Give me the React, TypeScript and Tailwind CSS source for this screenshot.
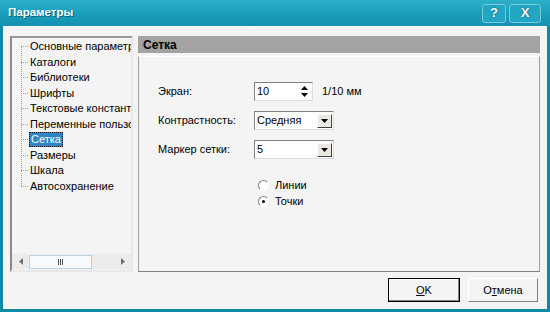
import React from "react";

const treeItems = [
  "Основные параметры",
  "Каталоги",
  "Библиотеки",
  "Шрифты",
  "Текстовые константы",
  "Переменные пользователя",
  "Сетка",
  "Размеры",
  "Шкала",
  "Автосохранение",
];

const font = { fontFamily: '"Liberation Sans", Arial, sans-serif' };

const DropButton = () => (
  <div className="flex h-[14px] w-[15px] shrink-0 items-center justify-center border border-t-white border-l-white border-r-[#404040] border-b-[#404040] bg-[#ece9e2]">
    <svg width="7" height="4" viewBox="0 0 7 4">
      <path d="M0 0h7L3.5 4z" fill="#000" />
    </svg>
  </div>
);

const Select = ({ value }: { value: string }) => (
  <div className="flex h-[19px] w-[80px] shrink-0 items-center justify-between border border-t-[#808080] border-l-[#808080] border-r-[#dcdcdc] border-b-[#dcdcdc] bg-white pl-[2px] pr-[1px] text-[11px] text-black">
    <span>{value}</span>
    <DropButton />
  </div>
);

const Radio = ({ label, checked }: { label: string; checked?: boolean }) => (
  <div className="flex h-[16px] items-center gap-[6px]">
    <div className="relative h-[11px] w-[11px] rounded-full border border-t-[#808080] border-l-[#808080] border-r-white border-b-white bg-white">
      {checked && (
        <div className="absolute left-[3px] top-[3px] h-[3px] w-[3px] rounded-full bg-black" />
      )}
    </div>
    <span className="text-[11px] text-black">{label}</span>
  </div>
);

export default function App() {
  return (
    <div
      className="flex h-[312px] w-[550px] flex-col overflow-hidden bg-[#0f8aa6]"
      style={font}
    >
      {/* title bar */}
      <div className="flex h-[26px] shrink-0 items-center justify-between bg-gradient-to-b from-[#2bb0cc] via-[#1a9fbd] to-[#1392b0] pl-[8px] pr-[9px]">
        <span className="text-[11.5px] font-bold text-white [text-shadow:1px_1px_0_#0b6478]">
          Параметры
        </span>
        <div className="flex gap-[3px]">
          <div className="flex h-[19px] w-[24px] items-center justify-center rounded-[3px] border border-[#7cc9da] bg-[#22a6c3] text-[13px] font-bold text-white [text-shadow:0_0_2px_#0b5060]">
            ?
          </div>
          <div className="flex h-[19px] w-[32px] items-center justify-center rounded-[3px] border border-[#7cc9da] bg-[#22a6c3] text-[13px] font-bold text-white [text-shadow:0_0_2px_#0b5060]">
            X
          </div>
        </div>
      </div>

      {/* body */}
      <div className="mx-[3px] mb-[3px] flex flex-1 flex-col bg-[#f4f4f4] pl-[7px] pr-[7px] pt-[10px]">
        <div className="flex h-[236px] gap-[5px]">
          {/* tree */}
          <div className="flex w-[123px] shrink-0 flex-col border-2 border-t-[#9a9a9a] border-l-[#8a8a8a] border-r-[#e8e8e8] border-b-[#e8e8e8] bg-[#f4f4f4]">
            <div className="relative flex-1 overflow-hidden pt-[1px]">
              <div className="absolute left-[9px] top-[8px] h-[140px] border-l border-dotted border-[#a0a0a0]" />
              {treeItems.map((item) => (
                <div key={item} className="flex h-[15.5px] items-center whitespace-nowrap">
                  <div className="ml-[9px] w-[7px] shrink-0 border-t border-dotted border-[#a0a0a0]" />
                  <span
                    className={
                      item === "Сетка"
                        ? "ml-[1px] shrink-0 border border-dotted border-[#1a1a1a] bg-[#2e86c8] px-[1px] text-[11px] leading-[13px] text-white"
                        : "ml-[2px] shrink-0 text-[11px] leading-[13px] text-black"
                    }
                  >
                    {item}
                  </span>
                </div>
              ))}
            </div>
            {/* horizontal scrollbar */}
            <div className="mb-[1px] flex h-[15px] shrink-0 items-center bg-[#ebebeb]">
              <div className="flex w-[17px] items-center justify-center">
                <svg width="4" height="7" viewBox="0 0 4 7">
                  <path d="M4 0v7L0 3.5z" fill="#707070" />
                </svg>
              </div>
              <div className="flex h-[14px] w-[63px] items-center justify-center border border-[#b8d4e4] bg-[#f6fafc]">
                <div className="flex gap-[1px]">
                  <div className="h-[6px] w-[1px] bg-[#555]" />
                  <div className="h-[6px] w-[1px] bg-[#555]" />
                  <div className="h-[6px] w-[1px] bg-[#555]" />
                </div>
              </div>
              <div className="flex-1" />
              <div className="flex w-[17px] items-center justify-center">
                <svg width="4" height="7" viewBox="0 0 4 7">
                  <path d="M0 0v7L4 3.5z" fill="#707070" />
                </svg>
              </div>
            </div>
          </div>

          {/* right panel */}
          <div className="flex flex-1 flex-col">
            <div className="flex h-[17px] items-center bg-[#a3a3a3] pl-[5px] text-[12px] font-bold text-black">
              Сетка
            </div>
            <div className="mt-[3px] flex-1 border border-t-white border-l-[#a0a0a0] border-r-[#a0a0a0] border-b-[#808080] pl-[19px] pt-[25px]">
              <div className="flex h-[19px] items-center">
                <span className="w-[96px] shrink-0 text-[11px] text-black">Экран:</span>
                <div className="flex h-[19px] w-[59px] shrink-0 items-center justify-between border border-t-[#808080] border-l-[#808080] border-r-[#dcdcdc] border-b-[#dcdcdc] bg-white pl-[2px] pr-[1px] text-[11px] text-black">
                  <span>10</span>
                  <div className="flex h-[15px] w-[14px] flex-col items-center justify-center gap-[3px]">
                    <svg width="7" height="4" viewBox="0 0 7 4">
                      <path d="M0 4h7L3.5 0z" fill="#000" />
                    </svg>
                    <svg width="7" height="4" viewBox="0 0 7 4">
                      <path d="M0 0h7L3.5 4z" fill="#000" />
                    </svg>
                  </div>
                </div>
                <span className="ml-[9px] text-[11px] text-black">1/10 мм</span>
              </div>
              <div className="mt-[10px] flex h-[19px] items-center">
                <span className="w-[96px] shrink-0 text-[11px] text-black">Контрастность:</span>
                <Select value="Средняя" />
              </div>
              <div className="mt-[10px] flex h-[19px] items-center">
                <span className="w-[96px] shrink-0 text-[11px] text-black">Маркер сетки:</span>
                <Select value="5" />
              </div>
              <div className="ml-[100px] mt-[18px] flex flex-col">
                <Radio label="Линии" />
                <Radio label="Точки" checked />
              </div>
            </div>
          </div>
        </div>

        {/* buttons */}
        <div className="mt-[6px] flex justify-end gap-[8px] pr-[2px]">
          <div className="flex h-[24px] w-[72px] items-center justify-center border border-black bg-[#f4f4f4] text-[11px] text-black shadow-[inset_-1px_-1px_0_#808080,inset_1px_1px_0_#ffffff]">
            <span>
              <span className="underline">O</span>K
            </span>
          </div>
          <div className="flex h-[24px] w-[70px] items-center justify-center border border-t-white border-l-white border-r-[#808080] border-b-[#808080] bg-[#f4f4f4] text-[11px] text-black">
            <span>
              О<span className="underline">т</span>мена
            </span>
          </div>
        </div>
      </div>
    </div>
  );
}
